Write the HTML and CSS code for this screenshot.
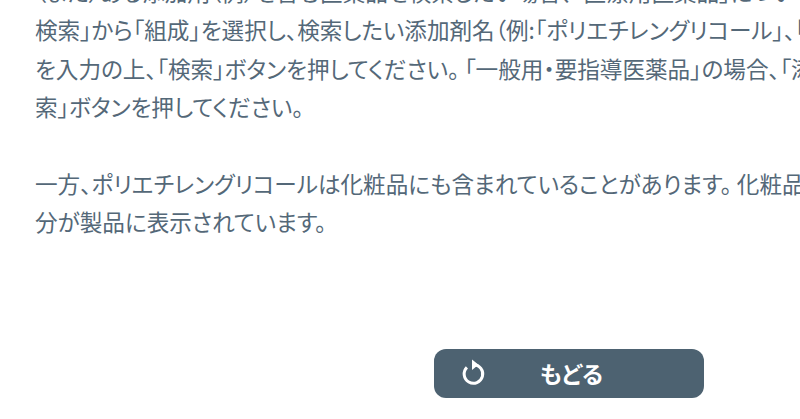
FILE: index.html
```html
<html>
<head>
<meta charset="utf-8">
<link rel="stylesheet" href="styles.css">
</head>
<body>
<div class="answer">
  <p class="para">（また）ある添加剤（例）を含む医薬品を検索したい場合、「医療用医薬品」については「詳細検索」を選択し<br>
  検索」から「組成」を選択し、検索したい添加剤名（例:「ポリエチレングリコール」、「マクロゴール」）<br>
  を入力の上、「検索」ボタンを押してください。 「一般用・要指導医薬品」の場合、「添加物」に入力し「検<br>
  索」ボタンを押してください。</p>
  <p class="para">一方、ポリエチレングリコールは化粧品にも含まれていることがあります。 化粧品の場合は全成<br>
  分が製品に表示されています。</p>
</div>
<div class="back-row">
  <a class="back-btn">
    <svg class="back-icon" viewBox="0 0 24 30" width="24" height="30">
      <path d="M4.9 8.4 A9.3 9.3 0 1 0 11.5 5.7" fill="none" stroke="#fff" stroke-width="3"/>
      <path d="M10 0.5 L16.5 5.7 L10 11 Z" fill="#fff"/>
    </svg>
    <span class="back-label">もどる</span>
  </a>
</div>
</body>
</html>
```
FILE: styles.css
```css
* {
  box-sizing: border-box;
  margin: 0;
  padding: 0;
}

html, body {
  height: 419px;
  overflow: hidden;
  background: #fff;
}

body {
  font-family: "Noto Sans CJK JP", "Noto Sans", sans-serif;
  font-size: 22.6px;
  color: #546878;
  font-feature-settings: "palt";
}

.answer {
  margin-top: -27px;
  padding-left: 35px;
  width: 1000px;
}

.para {
  line-height: 38.4px;
  margin-bottom: 38px;
  white-space: nowrap;
}

.back-row {
  display: flex;
  padding-top: 70px;
  padding-left: 434px;
  width: 800px;
}

.back-btn {
  display: flex;
  align-items: center;
  width: 270px;
  height: 49px;
  padding-left: 28px;
  background: #4d6271;
  border-radius: 12px;
  color: #fff;
  font-weight: 700;
}

.back-label {
  margin-left: 54px;
  font-size: 22.9px;
  margin-top: -2px;
}
```
